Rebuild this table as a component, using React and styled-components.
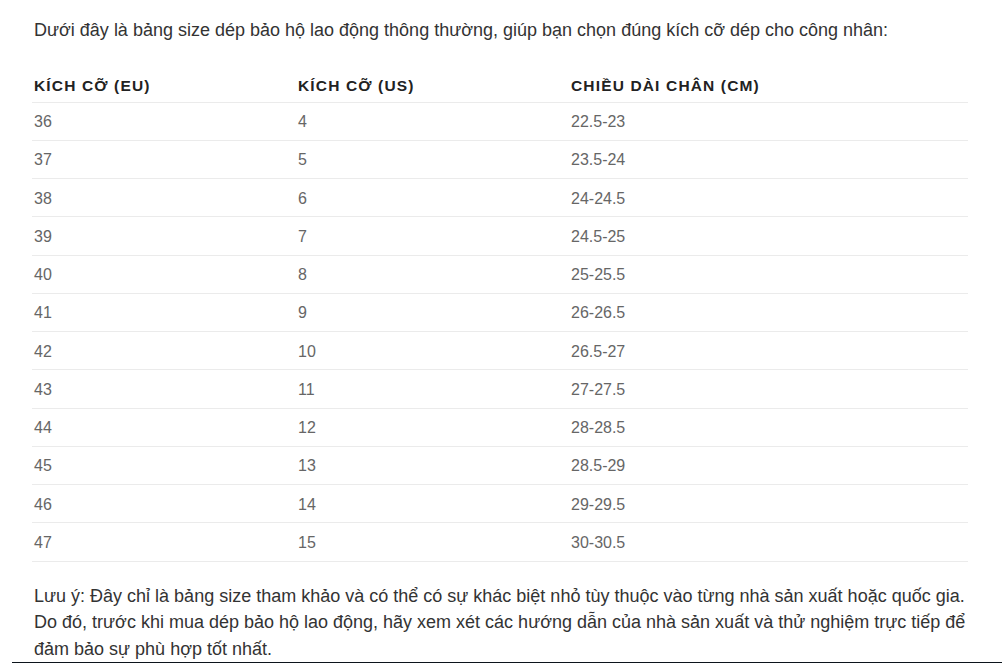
import React from "react";
import styled, { createGlobalStyle } from "styled-components";

const Global = createGlobalStyle`
  html, body { margin: 0; padding: 0; background: #fff; }
  body { font-family: "Liberation Sans", Arial, sans-serif; overflow: hidden; }
`;

const Page = styled.div`
  width: 1002px;
  height: 663px;
  display: flex;
  flex-direction: column;
  overflow: hidden;
`;

const Article = styled.div`
  width: 936px;
  padding: 17px 0 0 32px;
  flex: 1;
`;

const Para = styled.p`
  margin: 0;
  padding-left: 2px;
  font-size: 18px;
  line-height: 26.5px;
  color: #333;
`;

const Table = styled.div`
  margin: 21px 0 21px;
  display: flex;
  flex-direction: column;
`;

const Row = styled.div`
  display: grid;
  grid-template-columns: 264px 273px 1fr;
  align-items: center;
  box-sizing: border-box;
  height: ${(p) => (p.$head ? "38px" : "38.25px")};
  border-bottom: 1px solid #ebebeb;
`;

const Cell = styled.div`
  padding-left: 2px;
  font-size: ${(p) => (p.$head ? "15.5px" : "16px")};
  font-weight: ${(p) => (p.$head ? 700 : 400)};
  letter-spacing: ${(p) => (p.$head ? "1.15px" : "0")};
  color: ${(p) => (p.$head ? "#222" : "#666")};
  padding-top: ${(p) => (p.$head ? "6px" : "2px")};
`;

const BottomBar = styled.div`
  height: 2px;
  margin-left: 12px;
  background: #0c141c;
  flex-shrink: 0;
`;

const rows = [
  ["36", "4", "22.5-23"],
  ["37", "5", "23.5-24"],
  ["38", "6", "24-24.5"],
  ["39", "7", "24.5-25"],
  ["40", "8", "25-25.5"],
  ["41", "9", "26-26.5"],
  ["42", "10", "26.5-27"],
  ["43", "11", "27-27.5"],
  ["44", "12", "28-28.5"],
  ["45", "13", "28.5-29"],
  ["46", "14", "29-29.5"],
  ["47", "15", "30-30.5"],
];

export default function App() {
  return (
    <Page>
      <Global />
      <Article>
        <Para>
          Dưới đây là bảng size dép bảo hộ lao động thông thường, giúp bạn chọn đúng kích cỡ dép cho công nhân:
        </Para>
        <Table>
          <Row $head>
            <Cell $head>KÍCH CỠ (EU)</Cell>
            <Cell $head>KÍCH CỠ (US)</Cell>
            <Cell $head>CHIỀU DÀI CHÂN (CM)</Cell>
          </Row>
          {rows.map((r) => (
            <Row key={r[0]}>
              <Cell>{r[0]}</Cell>
              <Cell>{r[1]}</Cell>
              <Cell>{r[2]}</Cell>
            </Row>
          ))}
        </Table>
        <Para>
          Lưu ý: Đây chỉ là bảng size tham khảo và có thể có sự khác biệt nhỏ tùy thuộc vào từng nhà sản xuất hoặc quốc gia. Do đó, trước khi mua dép bảo hộ lao động, hãy xem xét các hướng dẫn của nhà sản xuất và thử nghiệm trực tiếp để đảm bảo sự phù hợp tốt nhất.
        </Para>
      </Article>
      <BottomBar />
    </Page>
  );
}
